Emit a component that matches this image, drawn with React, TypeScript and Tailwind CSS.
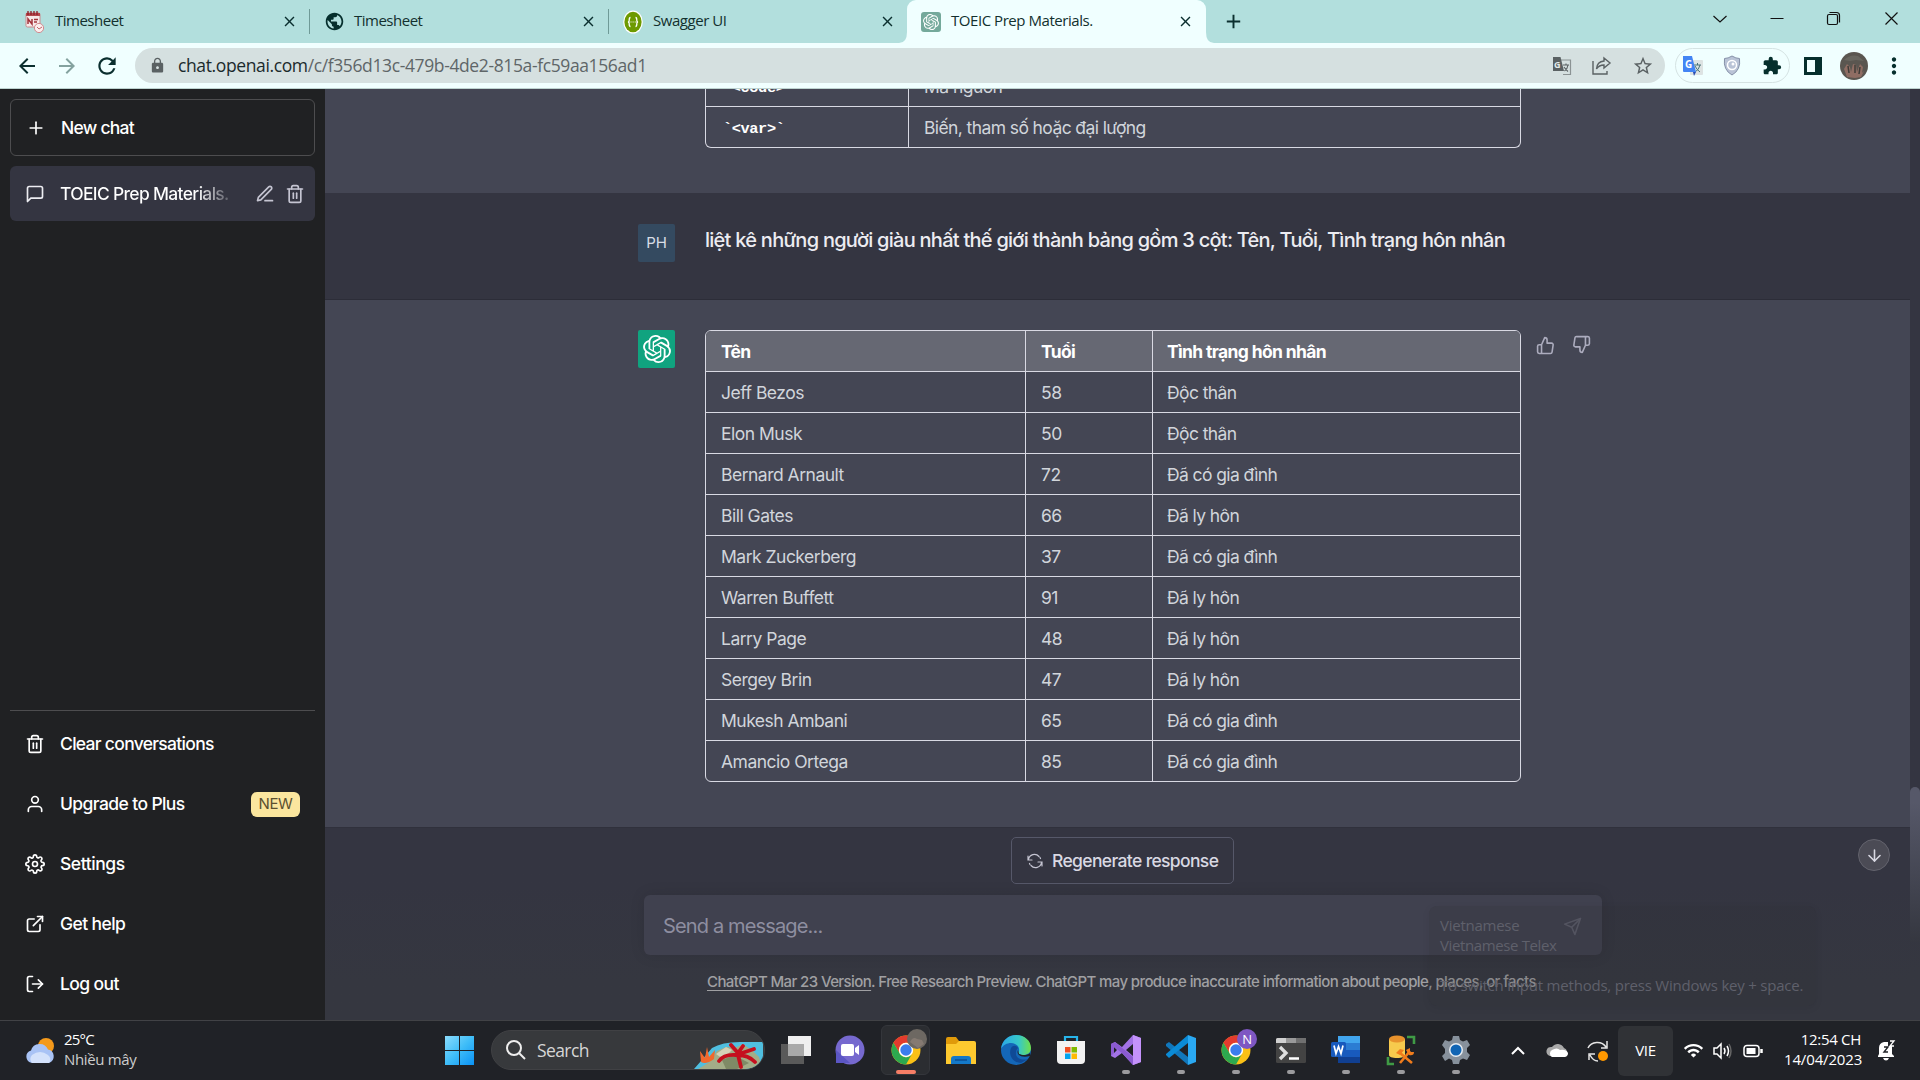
import React from "react";
import { FiMessageSquare, FiTrash2, FiUser, FiSettings, FiExternalLink, FiLogOut, FiThumbsUp, FiThumbsDown, FiSend, FiPlus, FiArrowDown, FiEdit3 } from "react-icons/fi";
import { MdLock, MdExtension, MdPublic, MdRefresh, MdArrowBack, MdArrowForward, MdClose, MdAdd, MdStarBorder, MdMoreVert, MdWifi } from "react-icons/md";
import { SiOpenai } from "react-icons/si";

const people = [
  ["Jeff Bezos", "58", "Độc thân"],
  ["Elon Musk", "50", "Độc thân"],
  ["Bernard Arnault", "72", "Đã có gia đình"],
  ["Bill Gates", "66", "Đã ly hôn"],
  ["Mark Zuckerberg", "37", "Đã có gia đình"],
  ["Warren Buffett", "91", "Đã ly hôn"],
  ["Larry Page", "48", "Đã ly hôn"],
  ["Sergey Brin", "47", "Đã ly hôn"],
  ["Mukesh Ambani", "65", "Đã có gia đình"],
  ["Amancio Ortega", "85", "Đã có gia đình"],
];

function CalendarIcon() {
  return (
    <svg width="20" height="24" viewBox="0 0 20 24">
      <rect x="1" y="3" width="14" height="14" rx="1.5" fill="#f7e9e9" stroke="#c98a8d" />
      <path d="M1 3h14v3H1z" fill="#b4474d" />
      <path d="M3 1v4M6 1v4M9 1v4M12 1v4" stroke="#8c1d26" strokeWidth="1.3" />
      <path d="M3 14V9l4 5V9M9 9.500h4M9 12h3" stroke="#a3333b" strokeWidth="1.5" fill="none" />
      <circle cx="14" cy="18" r="4.600" fill="#fbeeee" stroke="#d08a8e" />
      <path d="M12 17l2 2 3-2" stroke="#c0666b" fill="none" />
    </svg>
  );
}

function SwaggerIcon() {
  return (
    <svg width="20" height="24" viewBox="0 0 20 24">
      <ellipse cx="10" cy="12" rx="9.8" ry="11.5" fill="#fff" />
      <ellipse cx="10" cy="12" rx="8.6" ry="10.300" fill="#6d9a00" />
      <path d="M7.500 7.500c-2 0-1 3.500-1.500 4-.3.4-1 .5-1 .5s.7.1 1 .5c.5.5-.5 4 1.500 4M12.500 7.500c2 0 1 3.500 1.500 4 .3.4 1 .5 1 .5s-.7.1-1 .5c-.5.500.5 4-1.500 4" stroke="#fff" fill="none" strokeWidth="1.300" />
      <path d="M7.500 12h1M9.600 12h1M11.700 12h1" stroke="#fff" strokeWidth="1.200" />
    </svg>
  );
}

function Tab({ icon, title, sep, cls }: { icon: React.ReactNode; title: string; sep: boolean; cls: string }) {
  return (
    <div className="flex h-[43px] w-[299px] shrink-0 items-center">
      <div className="flex w-[30px] shrink-0 items-center">{icon}</div>
      <div className={"flex-1 pb-[2px] text-[15px] whitespace-nowrap text-[#12302e] " + cls}>{title}</div>
      <MdClose className="mr-[11px] size-[17px] text-[#0b2f2f]" />
      <div className={sep ? "mr-[14px] h-[25px] w-px bg-[#6f9a97]" : "mr-[14px] w-px"} />
    </div>
  );
}

function BrowserTop() {
  return (
    <div className="font-[Open_Sans,Noto_Sans,sans-serif]">
      <div className="flex h-[43px] items-center bg-[#b2dfdd] pl-[25px]">
        <Tab icon={<CalendarIcon />} title="Timesheet" sep cls="tracking-[-0.5px]" />
        <Tab icon={<MdPublic className="size-[21px] text-[#062f2d]" />} title="Timesheet" sep cls="tracking-[-0.5px]" />
        <div className="w-[276px]"><Tab icon={<SwaggerIcon />} title="Swagger UI" sep={false} cls="tracking-[-0.45px]" /></div>
        <svg width="8" height="43" viewBox="0 0 8 43" className="shrink-0"><path d="M8 32v11H0Q8 43 8 32" fill="#f0ffff" /></svg>
        <div className="flex h-[43px] w-[299px] shrink-0 items-center rounded-t-[9px] bg-[#f0ffff] pl-[14px]">
          <div className="mr-[10px] flex size-5 items-center justify-center rounded-[3px] bg-[#74a99b]"><SiOpenai className="size-[16px] text-white" /></div>
          <div className="flex-1 pb-[2px] text-[15px] tracking-[-0.45px] whitespace-nowrap text-[#12302e]">TOEIC Prep Materials.</div>
          <MdClose className="mr-[12px] size-[17px] text-[#0b2f2f]" />
        </div>
        <svg width="8" height="43" viewBox="0 0 8 43" className="shrink-0"><path d="M0 32v11h8Q0 43 0 32" fill="#f0ffff" /></svg>
        <MdAdd className="ml-[8px] size-[23px] shrink-0 text-[#0b2f2f]" />
        <svg className="ml-auto shrink-0" width="215" height="43" viewBox="0 0 215 43" fill="none" stroke="#111" strokeWidth="1.200">
          <path d="M8.500 16l6.500 6 6.500-6M65.500 18.500h13M180.500 12.500l12 12M192.500 12.500l-12 12" />
          <rect x="122.500" y="14.500" width="10" height="10" rx="1.500" />
          <path d="M124.500 12.500h7q3 0 3 3v7" />
        </svg>
      </div>
      <div className="flex h-[46px] items-center border-b border-[#bdd3d0] bg-[#f0ffff] pl-[15px]">
        <MdArrowBack className="size-6 shrink-0 text-[#0b2f2f]" />
        <MdArrowForward className="ml-[16px] size-6 shrink-0 text-[#84a29f]" />
        <MdRefresh className="ml-[15px] size-[26px] shrink-0 text-[#0b2f2f]" />
        <div className="ml-[15px] flex h-[35px] w-[1530px] shrink-0 items-center rounded-full bg-[#d5e0e0] pl-[14px]">
          <MdLock className="size-[17px] text-[#5a6163]" />
          <div className="ml-[12px] flex-1 text-[17.5px] tracking-[-0.38px] whitespace-nowrap text-[#5f6668]"><span className="text-[#1b2a2c]">chat.openai.com</span>/c/f356d13c-479b-4de2-815a-fc59aa156ad1</div>
          <svg width="20" height="20" viewBox="0 0 20 20">
            <path d="M9 4h9.500v14.500H11" fill="none" stroke="#8b9394" strokeWidth="1.200" />
            <path d="M1 1h7.500l3.500 14H1z" fill="#5a6163" />
            <path d="M11 9h6M14 7.500V9M12.500 15q3-2 3.500-6M12 11q2 3 4 4.500" stroke="#5a6163" strokeWidth="1.100" fill="none" />
            <text x="2" y="11.500" fontSize="9" fontWeight="700" fill="#e4ecec">G</text>
          </svg>
          <svg className="ml-[20px]" width="20" height="20" viewBox="0 0 20 20" fill="none" stroke="#5a6163" strokeWidth="1.400">
            <path d="M1 5v13h14v-3M12 2l6 5-6 5V9Q7 9 4.500 13 5 5.500 12 5z" />
          </svg>
          <MdStarBorder className="mr-[11px] ml-[20px] size-[22px] text-[#5a6163]" />
        </div>
        <div className="ml-[10px] flex h-[35px] w-[115px] shrink-0 items-center rounded-full border border-[#d5e3e3] pl-[6px]">
          <svg width="22" height="22" viewBox="0 0 22 22">
            <rect x="8" y="5" width="13" height="15" rx="1" fill="#dde3e3" /><path d="M12 10h7M15.500 8v2M13 17q4-2 5-7M13 11q2 4 5 6" stroke="#4a7479" fill="none" />
            <path d="M1 1h9l4 16H2a1 1 0 0 1-1-1z" fill="#4284f4" /><path d="M11 17h3l-2 4z" fill="#2a4db0" />
            <text x="3" y="12.500" fontSize="10" fontWeight="700" fill="#fff">G</text>
          </svg>
          <svg className="ml-[19px]" width="18" height="21" viewBox="0 0 18 21">
            <path d="M9 1q4 2.500 7.500 2.500Q18 15 9 20 0 15 1.500 3.500 5 3.500 9 1z" fill="#b9c3d6" stroke="#8590a8" />
            <circle cx="9" cy="10" r="4.500" fill="none" stroke="#fff" strokeWidth="1.500" /><circle cx="10" cy="9" r="1.500" fill="#fff" />
          </svg>
          <MdExtension className="ml-[21px] size-[20px] text-[#062f2d]" />
        </div>
        <div className="ml-[14px] h-[18px] w-[18px] shrink-0 border-[3px] border-r-[7px] border-[#062f2d]" />
        <svg className="ml-[18px] shrink-0" width="28" height="28" viewBox="0 0 28 28"><circle cx="14" cy="14" r="14" fill="#5a5650" /><path d="M4 17l3-5 3 3 1 5 2-8 3 1 1 7 3-8 3 3-1 6 2-2-3 6-6 1-8-1z" fill="#8f6d63" /><path d="M8 14l1 7M15 13v8M20 15l-1 7" stroke="#3f3c38" strokeWidth="1.500" /><path d="M4 8q6-6 14-4l6 5-8-1-6 1z" fill="#68665f" /></svg>
        <MdMoreVert className="ml-[13px] size-[26px] shrink-0 text-[#062f2d]" />
      </div>
    </div>
  );
}

function MenuItem({ icon, label, badge, cls }: { icon: React.ReactNode; label: string; badge?: boolean; cls: string }) {
  return (
    <div className="flex h-[60px] items-center pr-[15px] pl-[15px] text-[20px] text-white">
      <div className="flex w-[35px] text-[20px]">{icon}</div>
      <span className={"text-[17.5px] font-medium whitespace-nowrap " + cls}>{label}</span>
      {badge && <span className="ml-auto flex h-[25px] w-[49px] items-center justify-center rounded-md bg-[#fbe69e] pt-px text-[15px] tracking-[-0.3px] text-[#5c5030]">NEW</span>}
    </div>
  );
}

function Sidebar() {
  return (
    <aside className="flex w-[325px] shrink-0 flex-col bg-[#202123] px-[10px] pt-[10px]">
      <div className="flex h-[57px] items-center rounded-md border border-[#4d4d4f] pl-[15px] text-white">
        <FiPlus className="size-[20px]" />
        <span className="ml-[15px] pt-[2px] text-[17.5px] font-medium tracking-[-0.75px]">New chat</span>
      </div>
      <div className="mt-[10px] flex h-[55px] items-center rounded-md bg-[#343541] pl-[15px] text-white">
        <FiMessageSquare className="size-[20px] shrink-0 text-[#ececf1]" />
        <span className="ml-[15px] w-[170px] shrink-0 bg-gradient-to-r from-white from-80% to-[#343541] to-105% bg-clip-text pt-[2px] text-[17.5px] font-medium tracking-[-0.68px] whitespace-nowrap text-transparent">TOEIC Prep Materials.</span>
        <FiEdit3 className="ml-[25px] size-[20px] shrink-0 text-[#c5c5d2]" />
        <FiTrash2 className="ml-[10px] size-[20px] shrink-0 text-[#c5c5d2]" />
      </div>
      <div className="mt-auto border-t border-[#4d4d4f] pt-[3px] pb-[6px]">
        <MenuItem icon={<FiTrash2 />} label="Clear conversations" cls="tracking-[-0.7px]" />
        <MenuItem icon={<FiUser />} label="Upgrade to Plus" badge cls="tracking-[-0.6px]" />
        <MenuItem icon={<FiSettings />} label="Settings" cls="tracking-[-0.45px]" />
        <MenuItem icon={<FiExternalLink />} label="Get help" cls="tracking-[-0.6px]" />
        <MenuItem icon={<FiLogOut />} label="Log out" cls="tracking-[-0.6px]" />
      </div>
    </aside>
  );
}

function ResultTable() {
  return (
    <div className="w-[816px] overflow-hidden rounded-md border border-[#d9d9e3] text-[17.5px] tracking-[-0.5px] text-[#d1d5db]">
      <div className="grid h-[40px] grid-cols-[319px_127px_1fr] bg-[#666873] font-bold text-white">
        <div className="flex items-center pt-[2px] pl-[15px] tracking-[-0.8px]">Tên</div>
        <div className="flex items-center border-l border-[#d9d9e3] pt-[2px] pl-[15px] tracking-[-0.7px]">Tuổi</div>
        <div className="flex items-center border-l border-[#d9d9e3] pt-[2px] pl-[14px] tracking-[-0.65px]">Tình trạng hôn nhân</div>
      </div>
      {people.map(([name, age, status]) => (
        <div key={name} className="grid h-[41px] grid-cols-[319px_127px_1fr] border-t border-[#d9d9e3]">
          <div className="flex items-center pt-[2px] pl-[15px]">{name}</div>
          <div className="flex items-center border-l border-[#d9d9e3] pt-[2px] pl-[15px]">{age}</div>
          <div className="flex items-center border-l border-[#d9d9e3] pt-[2px] pl-[14px] tracking-[-0.6px]">{status}</div>
        </div>
      ))}
    </div>
  );
}

function Conversation() {
  return (
    <main className="relative flex min-w-0 flex-1 flex-col">
      <div className="flex min-h-0 flex-1">
        <div className="flex w-[1585px] shrink-0 flex-col">
          <section className="flex h-[104px] flex-col justify-end overflow-hidden bg-[#444654] pb-[45px] pl-[380px]">
            <div className="w-[816px] shrink-0 rounded-b-md border border-t-0 border-[#d9d9e3] text-[17.5px] tracking-[-0.55px] text-[#d1d5db]">
              <div className="grid h-[40px] grid-cols-[202px_1fr]">
                <div className="flex items-center pt-[4px] pl-[17px] font-['Liberation_Mono',monospace] text-[15.300px] font-bold tracking-[-0.4px] text-white">`&lt;code&gt;`</div>
                <div className="flex items-center border-l border-[#d9d9e3] pt-[3px] pl-[15px]">Mã nguồn</div>
              </div>
              <div className="grid h-[41px] grid-cols-[202px_1fr] border-t border-[#d9d9e3]">
                <div className="flex items-center pt-[4px] pl-[17px] font-['Liberation_Mono',monospace] text-[15.300px] font-bold tracking-[-0.4px] text-white">`&lt;var&gt;`</div>
                <div className="flex items-center border-l border-[#d9d9e3] pt-[2px] pl-[15px] tracking-[-0.6px]">Biến, tham số hoặc đại lượng</div>
              </div>
            </div>
          </section>
          <section className="flex h-[107px] items-start border-b border-[#2c2d38] bg-[#343541] pt-[31px] pl-[313px]">
            <div className="flex h-[38px] w-[37px] items-center justify-center rounded-[2px] bg-[#344a60] text-[15px] text-[#d8dde6]">PH</div>
            <div className="mt-px ml-[30px] text-[20px] leading-[30px] font-medium tracking-[-0.74px] whitespace-nowrap text-[#ececf1]">liệt kê những người giàu nhất thế giới thành bảng gồm 3 cột: Tên, Tuổi, Tình trạng hôn nhân</div>
          </section>
          <section className="flex h-[528px] items-start border-b border-[#30313c] bg-[#444654] pt-[30px] pl-[313px]">
            <div className="mr-[30px] flex h-[38px] w-[37px] items-center justify-center rounded-[2px] bg-[#10a37f]"><SiOpenai className="size-[28px] text-white" /></div>
            <ResultTable />
            <FiThumbsUp className="mt-[6px] ml-[15px] size-[19px] text-[#acacbe]" />
            <FiThumbsDown className="mt-[5px] ml-[17px] size-[19px] text-[#acacbe]" />
          </section>
          <Composer />
        </div>
        <div className="flex-1 bg-gradient-to-b from-[#343541] from-85% to-[#353740] to-95% pt-[698px]"><div className="h-[155px] rounded-t-full bg-gradient-to-b from-[#565869] from-10% to-[#353740]" /></div>
      </div>
    </main>
  );
}

function Composer() {
  return (
    <section className="relative flex h-[192px] flex-col bg-gradient-to-b from-[#343541] from-30% to-[#353740] to-80% pt-[9px]">
      <div className="ml-[686px] flex h-[47px] w-[223px] items-center rounded-[5px] border border-[#565869] bg-[#343541] pl-[15px]">
        <svg width="16" height="16" viewBox="0 0 16 16" fill="none" stroke="#c5c5d2" strokeWidth="1.200" strokeLinecap="round">
          <path d="M1 3v4h4M1.500 6.500A6 6 0 0 1 12 3.500M13.500 5.500l-.5-1M15 13V9h-4M14.500 9.500A6 6 0 0 1 4 12.500M2.500 10.500l.5 1" />
        </svg>
        <span className="ml-[9px] pt-[2px] text-[17.5px] font-medium tracking-[-0.64px] whitespace-nowrap text-[#d9d9e3]">Regenerate response</span>
      </div>
      <div className="mt-[11px] ml-[319px] flex h-[60px] w-[958px] items-center rounded-md bg-[#40414f] pr-[20px] pl-[19px] shadow-[0_0_15px_rgba(0,0,0,0.1)]">
        <span className="pt-[2px] text-[20px] tracking-[-0.85px] text-[#8e8ea0]">Send a message...</span>
        <FiSend className="mt-[3px] ml-auto size-[19px] text-[#5d5e6c]" />
      </div>
      <div className="mt-[16px] ml-[382px] text-[15px] leading-[22px] font-medium tracking-[-0.6px] whitespace-nowrap text-[#a0a0a3]"><span className="underline underline-offset-[3px]">ChatGPT Mar 23 Version</span>. Free Research Preview. ChatGPT may produce inaccurate information about people, places, or facts</div>
      <div className="absolute top-[11px] left-[1533px] flex size-8 items-center justify-center rounded-full border border-[#63636d] bg-[#4b4b55]"><FiArrowDown className="size-[19px] text-[#d9d9e3]" /></div>
      <div className="absolute top-[78px] left-[1104px] h-[100px] w-[387px] rounded-lg bg-[#2b2c34]/20 pt-[9px] pl-[11px] font-[Open_Sans,Noto_Sans,sans-serif] text-[15px] leading-[20px] whitespace-nowrap text-[#5f606b] shadow-[0_2px_8px_rgba(0,0,0,0.06)]">
        <div className="tracking-[-0.25px]">Vietnamese</div>
        <div className="tracking-[-0.38px]">Vietnamese Telex</div>
        <div className="mt-[20px] tracking-[-0.21px]">To switch input methods, press Windows key + space.</div>
      </div>
    </section>
  );
}

function ChromeLogo() {
  return (
    <g>
      <circle cx="15" cy="15" r="14.500" fill="#fbc116" />
      <path d="M2.400 7.800A14.500 14.500 0 0 1 27.600 7.800H15A7.200 7.200 0 0 0 8.800 18.600z" fill="#e33b2e" />
      <path d="M2.400 7.800A14.500 14.500 0 0 0 15 29.500L21.200 18.600A7.200 7.200 0 0 1 8.800 18.600z" fill="#2da94f" />
      <circle cx="15" cy="15" r="7.200" fill="#fff" />
      <circle cx="15" cy="15" r="5.700" fill="#3b7ded" />
    </g>
  );
}

const apps: { art: React.ReactNode; dot: boolean }[] = [
  { dot: false, art: <><path d="M0 4a2 2 0 0 1 2-2h8l3 4h15v6H0z" fill="#e09a0a" /><path d="M0 9h10l3-3h15a2 2 0 0 1 2 2v21H0z" fill="#fdc92f" /><path d="M5 29v-5a3 3 0 0 1 3-3h14a3 3 0 0 1 3 3v5z" fill="#1479c9" /><path d="M9 25h12" stroke="#0b4f93" strokeWidth="1.500" /></> },
  { dot: false, art: <><defs><linearGradient id="eg" x1="0" y1="0" x2="1" y2="0"><stop offset="0" stopColor="#2aa7e8" /><stop offset="0.600" stopColor="#37c8c8" /><stop offset="1" stopColor="#6fe04a" /></linearGradient></defs><circle cx="15" cy="15" r="15" fill="#1467b8" /><path d="M0 14C1 5 8 0 15 0c9 0 15 6 15 13 0 5-4 7-8 7-3 0-6-1-4-4 1-4-3-8-8-8-4 0-8 2-10 6z" fill="url(#eg)" /><path d="M10 13c-3 7 2 15 10 15l7-4c-7 2-13-1-12-7 0-2 1-3 2-4-2-3-5-3-7 0z" fill="#0f4a96" /><path d="M17 15c-2 5 3 8 12 6v-3c-3 3-8 2-11 1z" fill="#202228" /></> },
  { dot: false, art: <><path d="M9 8V2h12v6" fill="none" stroke="#27b4ea" strokeWidth="2.200" /><path d="M1 6h28v19a4 4 0 0 1-4 4H5a4 4 0 0 1-4-4z" fill="#f2f2f2" /><path d="M9 12h5.500v5.500H9z" fill="#f04f23" /><path d="M15.500 12H21v5.500h-5.500z" fill="#7fba00" /><path d="M9 18.500h5.500V24H9z" fill="#02a4ef" /><path d="M15.500 18.500H21V24h-5.500z" fill="#ffb901" /></> },
  { dot: true, art: <><path fillRule="evenodd" d="M0 9l4-2 7 5L22 0l8 3v24l-8 3-11-12-7 5-4-2zM3 12v6l3-3zM15 15l7 6V9z" fill="#a273e6" /><path d="M22 0l8 3v24l-8 3z" fill="#c492fb" /><path d="M0 9l4-2 18 15v8L11 18 3 12v6l-3 3z" fill="#8a5bd0" /></> },
  { dot: true, art: <><path d="M0 9l3-2 19 15v8L0 11z" fill="#1177bb" /><path d="M0 20l3 3L22 8V0L0 19z" fill="#0b8bd6" /><path d="M22 0l8 3v24l-8 3z" fill="#2aa9f2" /></> },
  { dot: true, art: <><ChromeLogo /><circle cx="26" cy="4" r="10" fill="#7e57c2" /><text x="21.300" y="8.700" fontSize="13" fill="#fff" fontFamily="Open Sans">N</text></> },
  { dot: true, art: <><rect y="3" width="30" height="25" rx="1.500" fill="#434343" /><path d="M0 8V4.500A1.500 1.500 0 0 1 1.500 3H10v5z" fill="#d0d0d0" /><path d="M10 3h10v5H10z" fill="#999" /><path d="M20 3h10v5H20z" fill="#707070" /><path d="M4 12l6 6-6 6" stroke="#ddd" strokeWidth="3.300" fill="none" /><path d="M13 23.500h10" stroke="#fff" strokeWidth="2.500" /></> },
  { dot: true, art: <><path d="M7 1h22v7H7z" fill="#41a5ee" /><path d="M7 8h22v7H7z" fill="#2b7cd3" /><path d="M7 15h22v7H7z" fill="#185abd" /><path d="M7 22h22v6H7z" fill="#103f91" /><rect y="7" width="15" height="15" rx="1.500" fill="#185abd" /><path d="M3 10.500l2 8 2.500-7 2.500 7 2-8" stroke="#fff" strokeWidth="1.700" fill="none" /></> },
  { dot: true, art: <><path d="M3 4v16c0 2 3 3 8 3s8-1 8-3V4z" fill="#f7ca4d" /><ellipse cx="11" cy="4" rx="8" ry="3.500" fill="#e8922c" /><path d="M21 2h7v7M8 29H2v-7" stroke="#3f9b45" strokeWidth="2.600" fill="none" /><path d="M14 28L24 16M14 18l12 10" stroke="#f07c1c" strokeWidth="2.600" fill="none" /><path d="M10 18l4-4 4 1-4 5zM20 15l4-2v4h4q0 4-5 3z" fill="#f07c1c" /></> },
  { dot: true, art: <><path d="M12 1h6l1 4 3 1.500 4-1.500 3 5-3 3v4l3 3-3 5-4-1.500-3 1.500-1 4h-6l-1-4-3-1.500L4 26l-3-5 3-3v-4l-3-4 3-5 4 1.500L11 5z" fill="#87919c" /><circle cx="15" cy="15" r="7" fill="#e8edf2" /><circle cx="15" cy="15" r="5.500" fill="#1165b4" /></> },
];

function Taskbar() {
  return (
    <footer className="flex h-[60px] items-stretch border-t border-[#414246] bg-[#202227] font-[Open_Sans,Noto_Sans,sans-serif] text-white">
      <div className="flex w-[445px] items-center pl-[25px]">
        <svg width="30" height="28" viewBox="0 0 30 28"><circle cx="21" cy="9" r="8" fill="#f59a1b" /><path d="M7 26a7 6.500 0 0 1-1-12.500 9 9 0 0 1 17-1A7 7 0 0 1 24 26z" fill="#a9c3f5" /><path d="M7 26a7 6.500 0 0 1 0-8q8-6 16 0a7 6 0 0 1 1 8z" fill="#d4e2fb" /></svg>
        <div className="ml-[9px] pb-[4px] text-[15px] leading-[20px] tracking-[-0.35px]">
          <div className="tracking-[-0.8px]">25°C</div>
          <div className="text-[#cdcdcd]">Nhiều mây</div>
        </div>
      </div>
      <svg className="mt-[15px] shrink-0" width="29" height="29" viewBox="0 0 29 29"><defs><linearGradient id="wg" x1="0" y1="0" x2="1" y2="1"><stop offset="0" stopColor="#8bdcfc" /><stop offset="0.500" stopColor="#3fbdf8" /><stop offset="1" stopColor="#0a92f5" /></linearGradient></defs><path d="M0 0h14v14H0zM15 0h14v14H15zM0 15h14v14H0zM15 15h14v14H15z" fill="url(#wg)" /></svg>
      <div className="mt-[9px] ml-[17px] flex h-[40px] w-[274px] shrink-0 items-center overflow-hidden rounded-full border border-[#404144] bg-[#37393c] pl-[14px]">
        <svg width="20" height="20" viewBox="0 0 20 20" fill="none" stroke="#eee" strokeWidth="2"><circle cx="8" cy="8" r="7" /><path d="M13 13l6 6" /></svg>
        <span className="ml-[11px] text-[17.5px] tracking-[-0.6px] text-[#d6d6d6]">Search</span>
        <svg className="mt-[10px] ml-auto" width="70" height="27" viewBox="0 0 70 27">
          <path d="M0 27Q8 18 18 6 28 0 46 0h23v18q-3 6-12 9z" fill="#50bfe0" />
          <path d="M4 27l10-6 9-12 9-4 9 1 8-4 10 7 6 6 2 6-9 6z" fill="#a3ad88" /><path d="M28 18l12-5 15 8-12 6H32z" fill="#7f8a66" /><path d="M22 12l10-7 6 3-9 9z" fill="#d5d2b8" />
          <path d="M7 20L6 9 11 16 13 5 15 15 21 8 20 17Q12 23 7 20z" fill="#f2682c" />
          <path d="M44 11L37 3M44 11l5-7M45 12l15-5M44 13q10 0 17 7M44 13l3 12M42 13Q30 12 25 19" stroke="#c50f1e" strokeWidth="3.800" fill="none" strokeLinecap="round" />
        </svg>
      </div>
      <svg className="mt-[15px] ml-[16px] shrink-0" width="30" height="28" viewBox="0 0 30 28"><path d="M7 0h23v20H7z" fill="#efefef" /><path d="M0 8h23v20H0z" fill="#5a5a5a" /><path d="M7 8h16v12H7z" fill="#a9a9a9" /></svg>
      <svg className="mt-[14px] ml-[24px] shrink-0" width="30" height="30" viewBox="0 0 30 30"><circle cx="15" cy="15" r="14.500" fill="#7669cf" /><path d="M1 15v13h14z" fill="#5b56c4" /><rect x="6" y="9" width="13" height="12" rx="2" fill="#fff" /><path d="M20 13l4-3v10l-4-3z" fill="#fff" /></svg>
      <div className="mt-[4px] ml-[16px] flex h-[50px] w-[49px] shrink-0 flex-col items-center rounded-md border border-[#34363b] bg-[#2b2d31] pt-[4px]">
        <svg width="36" height="36" viewBox="-3 -5 36 36" overflow="visible"><ChromeLogo /><circle cx="26" cy="4" r="10" fill="#6d6862" /><path d="M19 7q3-6 7-3l5 1 2 4-6 4-4-3z" fill="#857a72" /></svg>
        <div className="mt-[4px] h-[4px] w-[20px] rounded-full bg-[#f67e66]" />
      </div>
      <div className="ml-[3px] flex">
        {apps.map((app, i) => (
          <div key={i} className="flex w-[55px] flex-col items-center pt-[14px]">
            <svg width="30" height="30" viewBox="0 0 30 30" overflow="visible">{app.art}</svg>
            {app.dot && <div className="mt-[5px] h-[4px] w-[8px] rounded-full bg-[#9b9b9e]" />}
          </div>
        ))}
      </div>
      <div className="ml-auto flex items-center">
        <svg width="108" height="30" viewBox="1510 1035 108 30" fill="none">
          <path d="M1512 1053l6-6 6 6" stroke="#fff" strokeWidth="2" />
          <path d="M1550 1055a4.500 4.500 0 0 1 2-9 7 7 0 0 1 12 1 5 5 0 0 1 2 8z" fill="#a9a9a9" /><path d="M1552 1056a4 4 0 0 1 0-7q5-3 8 0 6-1 8 3a4 4 0 0 1-3 4z" fill="#fff" />
          <path d="M1588 1047a10 9 0 0 1 18-1M1607 1040v7h-6M1589 1059v-6h6M1590 1054q3 6 8 6" stroke="#e6e6e6" strokeWidth="1.500" /><circle cx="1603" cy="1055" r="5" fill="#ff9800" />
        </svg>
        <div className="flex h-[50px] w-[55px] items-center justify-center rounded-md bg-[#303236] text-[15px] tracking-[-0.3px]">VIE</div>
        <MdWifi className="ml-[10px] size-[21px]" />
        <svg className="ml-[9px]" width="52" height="20" viewBox="0 0 52 20" fill="none" stroke="#fff" strokeWidth="1.500">
          <path d="M1 7h3l4-4v14l-4-4H1zM11 7q2 3 0 6M14 5q3 5 0 10" /><path d="M16 3q4 7 0 14" stroke="#666" />
          <rect x="31" y="4.500" width="15" height="11" rx="3" /><rect x="33.500" y="7" width="9" height="6" fill="#fff" stroke="none" /><path d="M48.500 8v4" strokeWidth="2.500" />
        </svg>
        <div className="ml-[19px] w-[77px] pb-[4px] text-right text-[15px] leading-[20px] whitespace-nowrap"><div className="tracking-[-0.3px]">12:54 CH</div><div className="tracking-[-0.15px]">14/04/2023</div></div>
        <svg className="mr-[24px] ml-[16px]" width="19" height="21" viewBox="0 0 19 21"><path d="M2 14V8q0-5 5-6h4v4h4v8l2 2v1H1v-1z" fill="#fff" /><path d="M6 18h6q-1 2.500-3 2.500T6 18z" fill="#fff" /><path d="M7 7h4l-4 5h4" stroke="#202227" fill="none" strokeWidth="1.400" /><path d="M13 1h4l-4 5h4" stroke="#fff" fill="none" strokeWidth="1.300" /></svg>
      </div>
    </footer>
  );
}

export default function App() {
  return (
    <div className="flex h-[1080px] w-[1920px] flex-col overflow-hidden font-[Inter,sans-serif]">
      <BrowserTop />
      <div className="flex h-[931px] overflow-hidden">
        <Sidebar />
        <Conversation />
      </div>
      <Taskbar />
    </div>
  );
}
